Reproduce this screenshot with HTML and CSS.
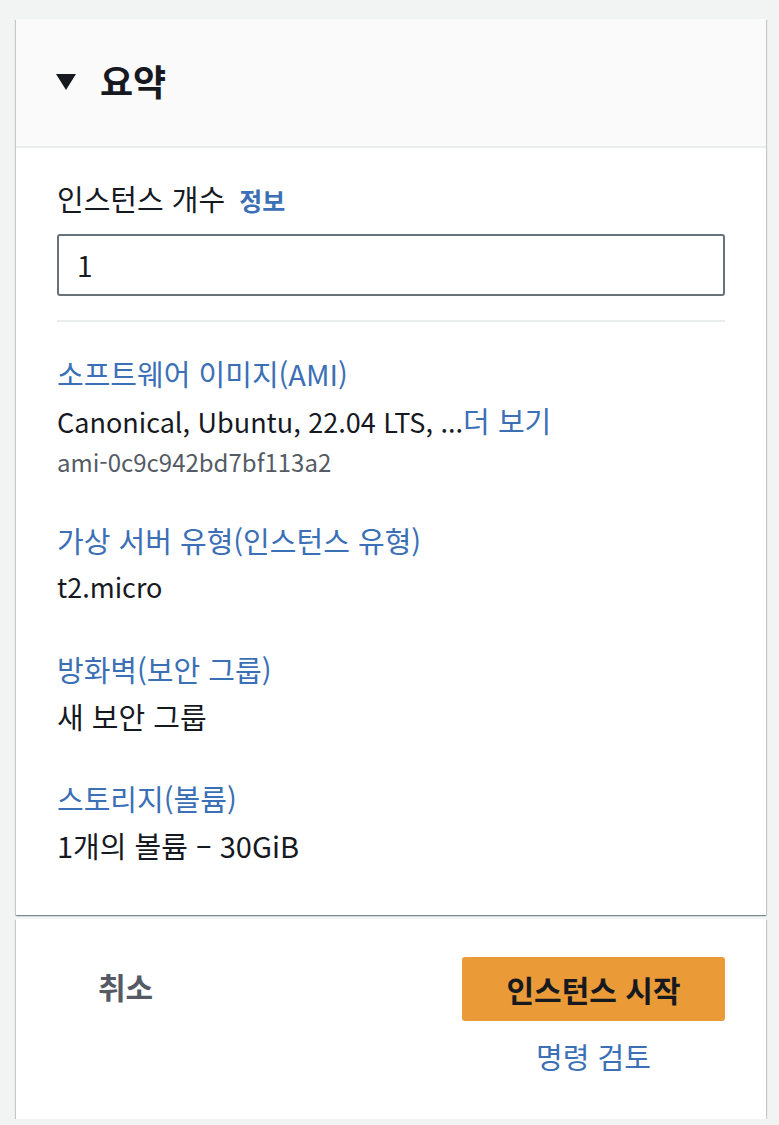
FILE: index.html
```html
<!DOCTYPE html>
<html lang="ko">
<head>
    <meta charset="UTF-8">
    <meta name="viewport" content="width=device-width, initial-scale=1.0">
    <title>요약</title>
    <link rel="stylesheet" href="styles.css">
</head>
<body>
    <div class="summary">
        <div class="summary-header">
            <span class="caret"></span>
            <h2 class="summary-title">요약</h2>
        </div>
        <div class="summary-body">
            <div class="count-label">인스턴스 개수 <a class="info-link" href="#">정보</a></div>
            <div class="count-input">1</div>
            <hr class="divider">

            <div class="item-list">
                <div class="item">
                    <a class="item-title" href="#">소프트웨어 이미지(AMI)</a>
                    <div class="item-value latin">Canonical, Ubuntu, 22.04 LTS, ...<a class="more-link" href="#">더 보기</a></div>
                    <div class="item-sub">ami-0c9c942bd7bf113a2</div>
                </div>
                <div class="item">
                    <a class="item-title" href="#">가상 서버 유형(인스턴스 유형)</a>
                    <div class="item-value latin">t2.micro</div>
                </div>
                <div class="item">
                    <a class="item-title" href="#">방화벽(보안 그룹)</a>
                    <div class="item-value">새 보안 그룹</div>
                </div>
                <div class="item">
                    <a class="item-title" href="#">스토리지(볼륨)</a>
                    <div class="item-value">1개의 볼륨 – 30GiB</div>
                </div>
            </div>
        </div>
    </div>

    <div class="actions">
        <button class="cancel-button">취소</button>
        <div class="launch-group">
            <button class="launch-button">인스턴스 시작</button>
            <a class="review-link" href="#">명령 검토</a>
        </div>
    </div>
</body>
</html>
```

FILE: styles.css
```css
body {
    margin: 0;
    padding: 19px 13px 0 16px;
    background-color: #f2f3f3;
    font-family: "Noto Sans CJK KR", "Noto Sans", sans-serif;
    color: #16191f;
}

a {
    text-decoration: none;
}

.summary {
    background-color: white;
    box-shadow: 0 1px 1px 0 rgba(0, 28, 36, 0.3), 1px 1px 1px 0 rgba(0, 28, 36, 0.15), -1px 1px 1px 0 rgba(0, 28, 36, 0.15);
}

.summary-header {
    display: flex;
    align-items: center;
    height: 121px;
    padding-left: 40px;
    padding-bottom: 6px;
    background-color: #fafafa;
    border-bottom: 2px solid #eaeded;
}

.caret {
    width: 0;
    height: 0;
    border-left: 10px solid transparent;
    border-right: 10px solid transparent;
    border-top: 16px solid #16191f;
    margin-right: 24px;
    margin-top: 4px;
}

.summary-title {
    margin: 0;
    font-size: 36px;
    font-weight: 700;
}

.summary-body {
    padding: 32px 41px 50px 41px;
}

.count-label {
    font-size: 29px;
    line-height: 36px;
}

.info-link {
    color: #3b6fb6;
    font-weight: 700;
    font-size: 25px;
    margin-left: 6px;
}

.count-input {
    margin-top: 16px;
    height: 58px;
    border: 2px solid #687078;
    border-radius: 3px;
    padding-left: 18px;
    font-size: 28px;
    line-height: 58px;
}

.divider {
    border: none;
    border-top: 2px solid #eaeded;
    margin: 24px 0 0 0;
}

.item-list {
    display: flex;
    flex-direction: column;
    gap: 42px;
    margin-top: 31px;
}

.item-title {
    display: block;
    color: #3b6fb6;
    font-size: 29px;
    line-height: 40px;
}

.item-value {
    font-size: 29px;
    line-height: 40px;
    margin-top: 7px;
}

.item-value.latin {
    font-size: 27px;
}

.more-link {
    color: #3b6fb6;
    font-size: 29px;
}

.item-sub {
    color: #545b64;
    font-size: 24px;
    line-height: 32px;
    margin-top: 4px;
}

.actions {
    display: flex;
    justify-content: space-between;
    align-items: flex-start;
    margin-top: 4px;
    padding: 38px 41px 43px 82px;
    background-color: white;
    box-shadow: 0 1px 1px 0 rgba(0, 28, 36, 0.3), 1px 1px 1px 0 rgba(0, 28, 36, 0.15), -1px 1px 1px 0 rgba(0, 28, 36, 0.15);
}

.cancel-button {
    background: none;
    border: none;
    padding: 0;
    margin-top: 7px;
    font-family: inherit;
    font-size: 30px;
    font-weight: 700;
    color: #545b64;
}

.launch-group {
    display: flex;
    flex-direction: column;
    align-items: center;
}

.launch-button {
    width: 263px;
    height: 64px;
    background-color: #ea9b38;
    border: none;
    border-radius: 3px;
    font-family: inherit;
    font-size: 30px;
    font-weight: 700;
    color: #16191f;
}

.review-link {
    margin-top: 15px;
    color: #3b6fb6;
    font-size: 29px;
    line-height: 40px;
}
```
